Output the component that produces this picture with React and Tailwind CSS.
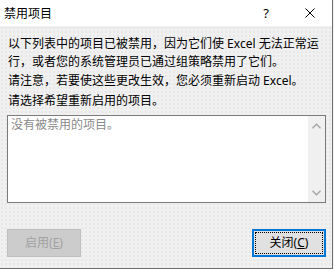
import React from "react";

function Chevron({ up }) {
  return (
    <svg width="9" height="6" viewBox="0 0 9 6" className="block">
      <polyline
        points={up ? "0.5,5.2 4.5,1.2 8.5,5.2" : "0.5,0.8 4.5,4.8 8.5,0.8"}
        fill="none"
        stroke="#a6a6a6"
        strokeWidth="1.4"
      />
    </svg>
  );
}

export default function App() {
  return (
    <div className="w-[334px] h-[269px] bg-[#f3f3f3] font-['Noto_Sans','Noto_Sans_CJK_SC',sans-serif] text-[12px] text-black">
      <div className="w-[333px] h-[269px] flex flex-col border-r border-b border-[#6f6f6f] bg-[#f0f0f0]">
        {/* title bar */}
        <div className="h-[26px] shrink-0 bg-white flex items-center">
          <div className="pl-[4px] leading-[14px] font-['Noto_Sans_CJK_SC',sans-serif]">禁用项目</div>
          <div className="ml-auto flex h-full">
            <div className="w-[44px] h-full flex items-center justify-center text-[13px] leading-[14px]">?</div>
            <div className="w-[44px] h-full flex items-center justify-center">
              <svg width="10" height="10" viewBox="0 0 10 10">
                <line x1="0.5" y1="0.5" x2="9.5" y2="9.5" stroke="#000" strokeWidth="1" />
                <line x1="9.5" y1="0.5" x2="0.5" y2="9.5" stroke="#000" strokeWidth="1" />
              </svg>
            </div>
          </div>
        </div>

        {/* body */}
        <div className="flex-1 flex flex-col pl-[7px] pt-[9px] bg-[radial-gradient(#e2e2e2_0.6px,transparent_0.9px)] bg-[length:4px_4px]">
          <p className="pl-px leading-[18px] whitespace-nowrap">
            以下列表中的项目已被禁用，因为它们使 Excel 无法正常运
            <br />
            行，或者您的系统管理员已通过组策略禁用了它们。
          </p>
          <p className="pl-px mt-[1px] leading-[18px] whitespace-nowrap">
            请注意，若要使这些更改生效，您必须重新启动 Excel。
          </p>
          <p className="pl-px mt-[2px] leading-[18px] whitespace-nowrap">请选择希望重新启用的项目。</p>

          <div className="mt-[5px] w-[319px] h-[88px] border border-[#7a7a7a] bg-white flex">
            <div className="flex-1 pl-[3px] pt-[1px] leading-[16px] text-[#8a8a8a]">没有被禁用的项目。</div>
            <div className="w-[17px] h-full bg-[#f0f0f0] flex flex-col items-center justify-between pt-[7px] pb-[6px]">
              <Chevron up />
              <Chevron />
            </div>
          </div>

          <div className="mt-[26px] w-[319px] flex justify-between">
            <div className="w-[74px] h-[28px] border border-[#bfbfbf] bg-[#cccccc] flex items-center justify-center text-[#a2a2a2] leading-[14px]">
              <span>
                启用(<u>E</u>)
              </span>
            </div>
            <div className="w-[74px] h-[28px] border-2 border-[#0078d7] bg-[#e1e1e1] p-[1px]">
              <div className="w-full h-full border border-dotted border-black flex items-center justify-center leading-[14px]">
                <span>
                  关闭(<u>C</u>)
                </span>
              </div>
            </div>
          </div>
        </div>
      </div>
    </div>
  );
}
